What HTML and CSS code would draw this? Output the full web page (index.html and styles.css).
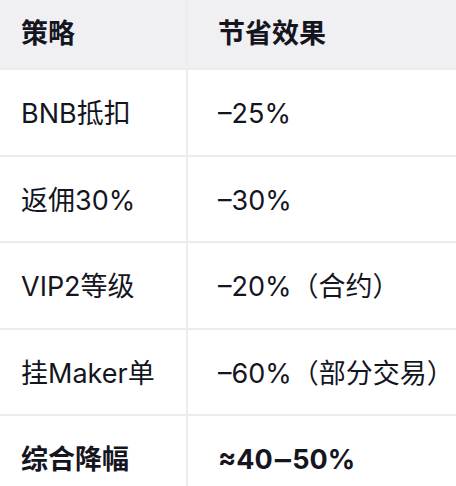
FILE: index.html
```html
<!DOCTYPE html>
<html lang="zh-CN">
<head>
<meta charset="utf-8">
<link rel="stylesheet" href="styles.css">
</head>
<body>
<table class="fee-table">
  <thead>
    <tr class="head-row">
      <th class="col-strategy">策略</th>
      <th class="col-effect">节省效果</th>
    </tr>
  </thead>
  <tbody>
    <tr class="body-row"><td class="col-strategy">BNB抵扣</td><td class="col-effect">–25%</td></tr>
    <tr class="body-row"><td class="col-strategy">返佣30%</td><td class="col-effect">–30%</td></tr>
    <tr class="body-row"><td class="col-strategy">VIP2等级</td><td class="col-effect">–20%（合约）</td></tr>
    <tr class="body-row"><td class="col-strategy">挂Maker单</td><td class="col-effect">–60%（部分交易）</td></tr>
    <tr class="body-row total-row"><td class="col-strategy">综合降幅</td><td class="col-effect">≈40<span class="long-dash">–</span>50%</td></tr>
  </tbody>
</table>
</body>
</html>
```
FILE: styles.css
```css
html, body {
  margin: 0;
  padding: 0;
  background: #ffffff;
}
body {
  font-family: Inter, "Noto Sans CJK SC", "Noto Sans", sans-serif;
  color: #15151f;
  overflow: hidden;
}
.fee-table {
  width: 470px;
  border-collapse: collapse;
  table-layout: fixed;
  font-size: 27px;
}
.fee-table th,
.fee-table td {
  text-align: left;
  vertical-align: middle;
  padding: 4px 0 0 0;
  line-height: 1.2;
  border-bottom: 2px solid #ececef;
  white-space: nowrap;
}
.col-strategy {
  width: 165px;
  padding-left: 21px !important;
  border-right: 2px solid #ececef;
}
.col-effect {
  padding-left: 30px !important;
}
.head-row th {
  height: 68px;
  padding-top: 0;
  background: #f0f0f3;
  font-weight: 700;
}
.body-row td {
  height: 80.5px;
  font-weight: 400;
}
.total-row td {
  font-weight: 700;
}
.long-dash {
  display: inline-block;
  transform: scaleX(1.2);
  margin: 0 3px;
}
```
